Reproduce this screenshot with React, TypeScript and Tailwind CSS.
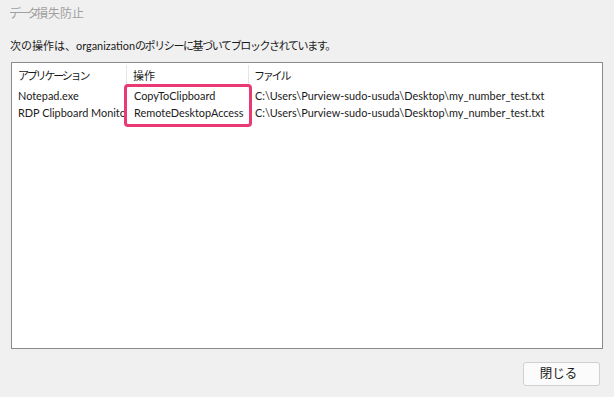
const font = { fontFamily: 'Lato, "Noto Sans CJK JP", sans-serif' }

const rows = [
  { app: 'Notepad.exe', op: 'CopyToClipboard', file: 'C:\\Users\\Purview-sudo-usuda\\Desktop\\my_number_test.txt' },
  { app: 'RDP Clipboard Monitor', op: 'RemoteDesktopAccess', file: 'C:\\Users\\Purview-sudo-usuda\\Desktop\\my_number_test.txt' },
]

export default function App() {
  return (
    <div className="w-[614px] h-[397px] bg-[#f0f0f0] flex flex-col overflow-hidden text-[10.9px] text-[#1a1a1a]" style={font}>
      {/* title */}
      <div className="h-[30px] pl-[9px] pt-[5px] text-[12px] text-[#a0a0a0] whitespace-nowrap">
        <span className="tracking-[-3px]">データ</span>損失防止
      </div>

      <div className="pl-[10px] pt-[8px] h-[32px] text-[11px] whitespace-nowrap">
        次の操作は、<span className="text-[10.9px]">organization</span>
        <span className="tracking-[-1.4px]">のポリシーに基づいてブロックされています。</span>
      </div>

      {/* list */}
      <div className="relative mx-[11px] w-[592px] h-[287px] bg-white border border-[#8a8a8a]">
        <div className="flex h-[22px] items-center mt-[2px] text-[11px]">
          <div className="w-[115px] pl-[6px] h-full flex items-center border-r border-[#e5e5e5] tracking-[-2.2px]">アプリケーション</div>
          <div className="w-[122px] pl-[6px] h-full flex items-center border-r border-[#e5e5e5]">操作</div>
          <div className="pl-[5px] tracking-[-2.2px]">ファイル</div>
        </div>
        <div className="pt-[1px]">
          {rows.map(r => (
            <div key={r.op} className="flex h-[17px] items-center">
              <div className="w-[115px] pl-[6px] whitespace-nowrap overflow-hidden">{r.app}</div>
              <div className="w-[122px] pl-[7px] whitespace-nowrap">{r.op}</div>
              <div className="pl-[6px] whitespace-nowrap">{r.file}</div>
            </div>
          ))}
        </div>

        {/* highlight annotation */}
        <div className="absolute left-[112px] top-[21px] w-[128px] h-[43px] border-[3px] border-[#ea3a74] rounded-[4px]" />
      </div>

      <div className="flex justify-end pr-[14px] pt-[13px]">
        <button className="w-[77px] h-[24px] bg-[#fbfbfb] border border-[#d0d0d0] rounded-[3px] text-[12.5px] text-[#1a1a1a] pr-[6px]">閉じる</button>
      </div>
    </div>
  )
}
